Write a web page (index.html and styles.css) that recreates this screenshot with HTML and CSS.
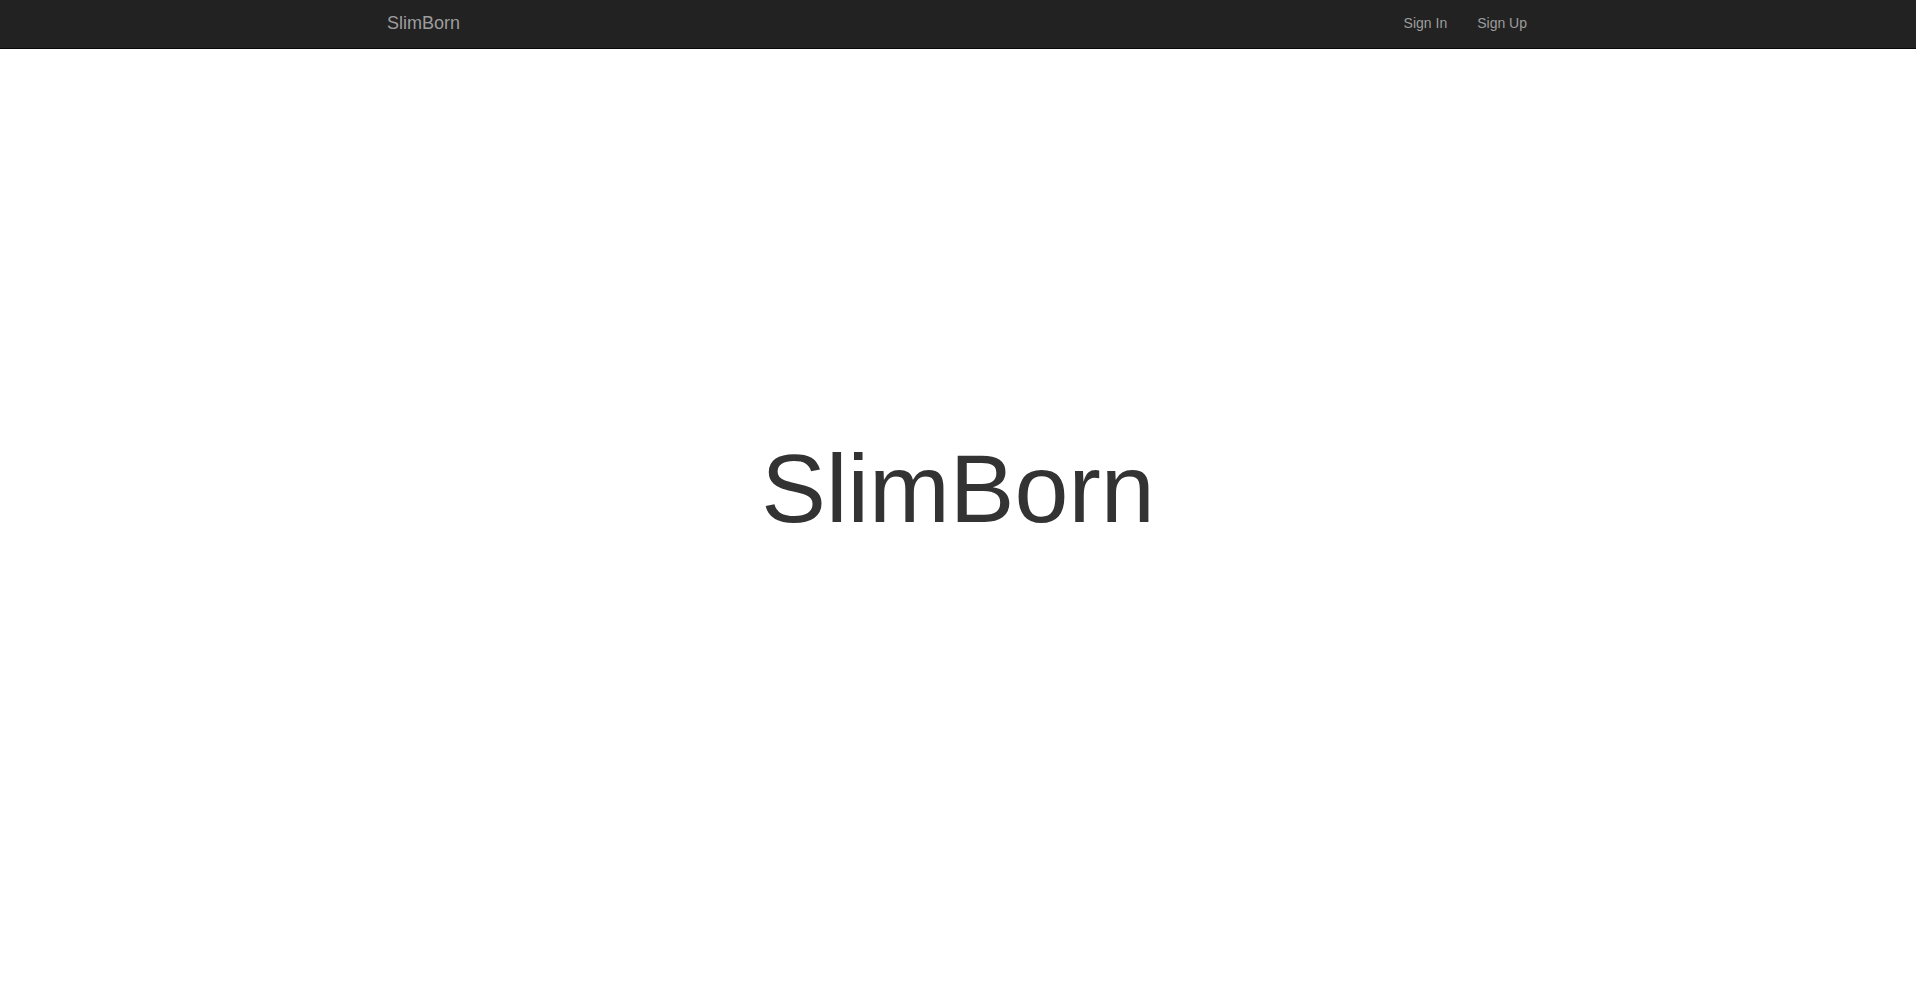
FILE: index.html
```html
<!DOCTYPE html>
<html lang="en">
<head>
<meta charset="utf-8">
<title>SlimBorn</title>
<link rel="stylesheet" href="styles.css">
</head>
<body>
<nav class="navbar">
  <div class="container">
    <a class="brand" href="#">SlimBorn</a>
    <ul class="nav">
      <li><a href="#">Sign In</a></li>
      <li><a href="#">Sign Up</a></li>
    </ul>
  </div>
</nav>
<main class="hero">
  <h1 class="title">SlimBorn</h1>
</main>
</body>
</html>
```

FILE: styles.css
```css
* { box-sizing: border-box; }
html, body { margin: 0; padding: 0; height: 100%; }
body {
  font-family: "Liberation Sans", Arial, Helvetica, sans-serif;
  color: #333;
  background: #fff;
  display: flex;
  flex-direction: column;
  min-height: 100vh;
}
.navbar {
  background: #222;
  border-bottom: 1px solid #080808;
  height: 49px;
  flex: none;
}
.container {
  width: 1170px;
  margin-left: calc(50% - 586px);
  display: flex;
  justify-content: space-between;
  align-items: stretch;
  height: 100%;
}
.brand {
  font-size: 18px;
  line-height: 20px;
  color: #9d9d9d;
  text-decoration: none;
  padding: 13px 15px;
}
.nav {
  list-style: none;
  margin: 0;
  padding: 0;
  display: flex;
}
.nav a {
  display: block;
  font-size: 14px;
  line-height: 20px;
  color: #9d9d9d;
  text-decoration: none;
  padding: 13px 15px;
}
.hero {
  flex: 1;
  display: flex;
  align-items: center;
  justify-content: center;
  padding-bottom: 54px;
}
.title {
  margin: 0;
  font-size: 97px;
  font-weight: normal;
  line-height: 1.1;
  color: #333;
}
```
